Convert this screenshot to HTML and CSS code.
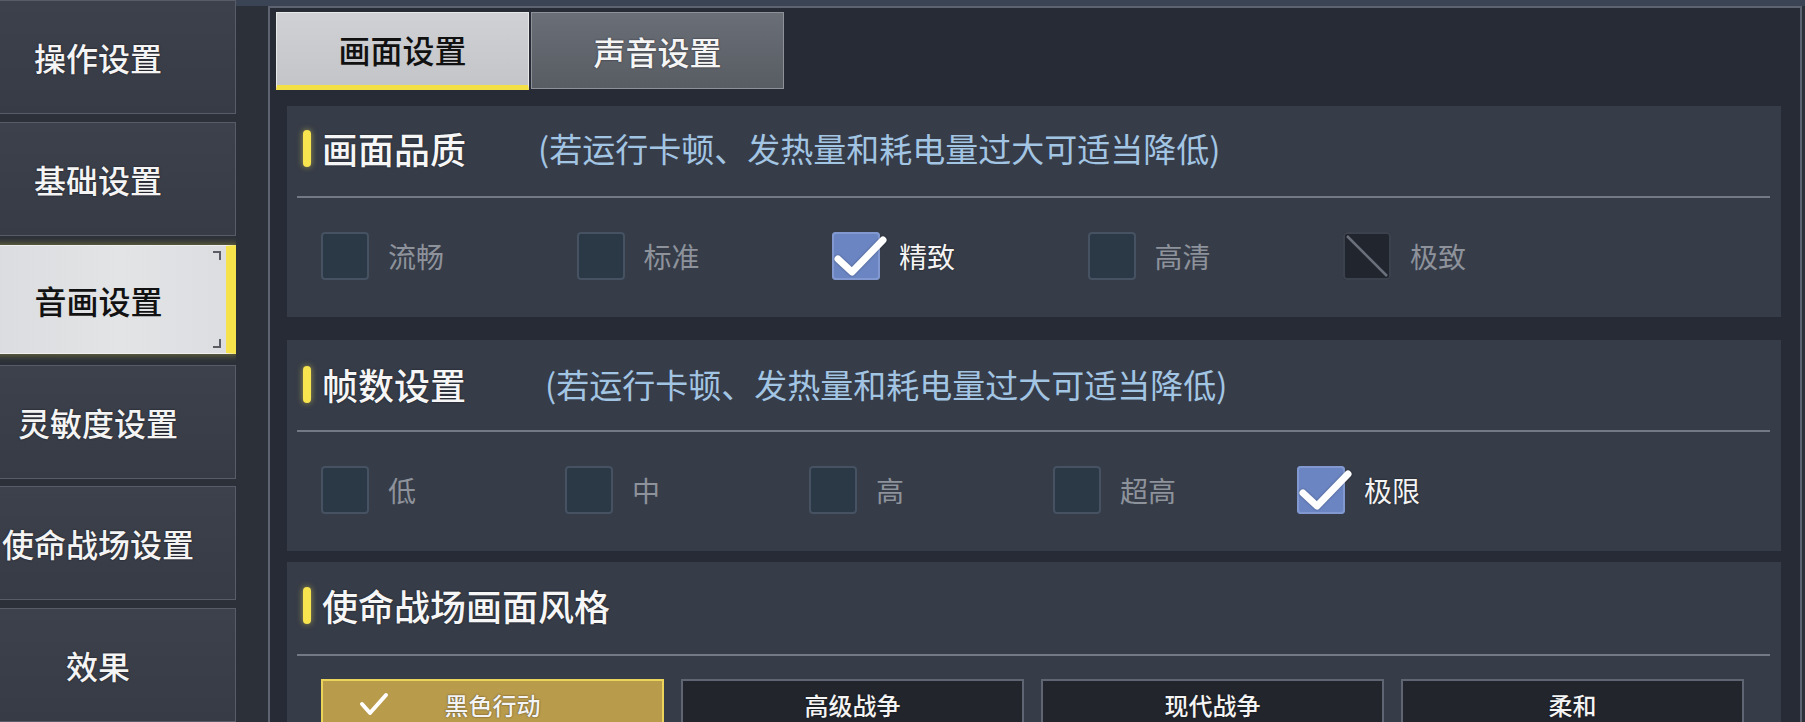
FILE: index.html
```html
<!DOCTYPE html>
<html lang="zh-CN">
<head>
<meta charset="utf-8">
<title>音画设置</title>
<link rel="stylesheet" href="styles.css">
</head>
<body>
<div class="screen">
  <nav class="sidebar">
    <div class="side-tab">操作设置</div>
    <div class="side-tab">基础设置</div>
    <div class="side-tab active">音画设置</div>
    <div class="side-tab">灵敏度设置</div>
    <div class="side-tab">使命战场设置</div>
    <div class="side-tab">效果</div>
  </nav>

  <main class="frame">
    <div class="top-tabs">
      <div class="top-tab active">画面设置</div>
      <div class="top-tab">声音设置</div>
    </div>

    <section class="card card-1">
      <div class="card-head">
        <span class="pill"></span>
        <span class="card-title">画面品质</span>
        <span class="card-hint">(若运行卡顿、发热量和耗电量过大可适当降低)</span>
      </div>
      <div class="divider"></div>
      <div class="opts opts-quality">
        <label class="opt"><span class="box"></span><span>流畅</span></label>
        <label class="opt"><span class="box"></span><span>标准</span></label>
        <label class="opt on"><span class="box checked"><svg viewBox="0 0 48 48" width="48" height="48"><polyline points="6,27 20,40 51,8" fill="none" stroke="#fff" stroke-width="7" stroke-linecap="round" stroke-linejoin="round"/></svg></span><span>精致</span></label>
        <label class="opt"><span class="box"></span><span>高清</span></label>
        <label class="opt"><span class="box disabled"><svg viewBox="0 0 48 48" width="48" height="48"><line x1="4" y1="4" x2="44" y2="44" stroke="#6b717c" stroke-width="2.5"/></svg></span><span>极致</span></label>
      </div>
    </section>

    <section class="card card-2">
      <div class="card-head">
        <span class="pill"></span>
        <span class="card-title">帧数设置</span>
        <span class="card-hint">(若运行卡顿、发热量和耗电量过大可适当降低)</span>
      </div>
      <div class="divider"></div>
      <div class="opts opts-fps">
        <label class="opt"><span class="box"></span><span>低</span></label>
        <label class="opt"><span class="box"></span><span>中</span></label>
        <label class="opt"><span class="box"></span><span>高</span></label>
        <label class="opt"><span class="box"></span><span>超高</span></label>
        <label class="opt on"><span class="box checked"><svg viewBox="0 0 48 48" width="48" height="48"><polyline points="6,27 20,40 51,8" fill="none" stroke="#fff" stroke-width="7" stroke-linecap="round" stroke-linejoin="round"/></svg></span><span>极限</span></label>
      </div>
    </section>

    <section class="card card-3">
      <div class="card-head">
        <span class="pill"></span>
        <span class="card-title">使命战场画面风格</span>
      </div>
      <div class="divider"></div>
      <div class="styles">
        <div class="style-btn selected">
          <svg class="style-check" viewBox="0 0 30 24" width="30" height="24"><polyline points="3,12 11,21 27,3" fill="none" stroke="#fff" stroke-width="4" stroke-linecap="round" stroke-linejoin="round"/></svg>
          <span>黑色行动</span>
          <span></span>
        </div>
        <div class="style-btn"><span></span><span>高级战争</span><span></span></div>
        <div class="style-btn"><span></span><span>现代战争</span><span></span></div>
        <div class="style-btn"><span></span><span>柔和</span><span></span></div>
      </div>
    </section>
  </main>
</div>
</body>
</html>
```

FILE: styles.css
```css
html, body {
  margin: 0;
  padding: 0;
}

body {
  width: 1805px;
  height: 722px;
  overflow: hidden;
  background: #2b3039;
  font-family: "Noto Sans CJK SC", "Noto Sans", sans-serif;
  color: #f3f3f3;
}

.screen {
  display: flex;
  align-items: flex-start;
  height: 722px;
  overflow: hidden;
  background:
    linear-gradient(#3b4455 0, #3b4455 6px, transparent 6px),
    #2b3039;
}

/* ---------- sidebar ---------- */
.sidebar {
  width: 276px;
  height: 722px;
  overflow: hidden;
  margin-left: -40px;
  flex-shrink: 0;
  display: flex;
  flex-direction: column;
  gap: 7.5px;
}

.side-tab {
  height: 114px;
  flex-shrink: 0;
  box-sizing: border-box;
  border: 1px solid #575c68;
  background: linear-gradient(#3d414c, #373b46);
  color: #f4f4f4;
  font-size: 32px;
  font-weight: 500;
  display: flex;
  align-items: center;
  justify-content: center;
  text-shadow: 0 0 2px rgba(0, 0, 0, 0.7);
  position: relative;
}

.side-tab.active {
  height: 109px;
  margin: 2px 0 3px;
  padding-left: 10px;
  background: linear-gradient(90deg, #d9dadd, #e3e4e6 60%, #dcdde0);
  border: 1px solid #f0f0f0;
  border-right: 10px solid #f6e34c;
  box-shadow: 4px 0 8px rgba(246, 227, 76, 0.45);
  color: #121212;
  text-shadow: none;
}

.side-tab.active::before,
.side-tab.active::after {
  content: "";
  position: absolute;
  right: 5px;
  width: 6px;
  height: 7px;
  border-right: 2px solid #5a5d63;
}

.side-tab.active::before {
  top: 5px;
  border-top: 2px solid #5a5d63;
}

.side-tab.active::after {
  bottom: 5px;
  border-bottom: 2px solid #5a5d63;
}

/* ---------- frame ---------- */
.frame {
  width: 1534px;
  height: 716px;
  overflow: hidden;
  box-sizing: border-box;
  margin: 6px 0 0 32px;
  border: 2px solid #5d6370;
  border-bottom: 0;
  background: #262b35;
  padding: 4px 19px 0 17px;
  display: flex;
  flex-direction: column;
  flex-shrink: 0;
}

.top-tabs {
  display: flex;
  gap: 2px;
  margin-left: -11px;
  height: 78px;
  flex-shrink: 0;
}

.top-tab {
  width: 253px;
  box-sizing: border-box;
  font-size: 32px;
  font-weight: 500;
  display: flex;
  align-items: center;
  justify-content: center;
  background: linear-gradient(#6a6e76, #585c63);
  border: 1px solid #8e9197;
  color: #f5f5f5;
  text-shadow: 0 0 2px rgba(0, 0, 0, 0.6);
  height: 77px;
}

.top-tab.active {
  height: 78px;
  background: linear-gradient(#d0d1d4, #c4c5c9);
  border: 1px solid #e8e8e8;
  border-bottom: 5px solid #f3df46;
  color: #111;
  text-shadow: none;
}

/* ---------- cards ---------- */
.card {
  background: #363c48;
  padding: 24px 11px 37px 10px;
  flex-shrink: 0;
}

.card-1 {
  margin-top: 16px;
}

.card-2 {
  margin-top: 23px;
  padding-top: 26px;
  padding-bottom: 37px;
}

.card-2 .divider {
  margin-top: 28px;
}

.card-3 {
  margin-top: 11px;
  padding-top: 25px;
}

.card-head {
  display: flex;
  align-items: center;
  height: 36px;
  margin-left: 6px;
}

.pill {
  width: 8px;
  height: 37px;
  border-radius: 4px;
  background: #f7e44f;
  box-shadow: 0 0 6px rgba(247, 228, 79, 0.55);
  flex-shrink: 0;
}

.card-title {
  margin-left: 11px;
  font-size: 36px;
  line-height: 36px;
  font-weight: 500;
  color: #f6f6f6;
  text-shadow: 0 0 2px rgba(0, 0, 0, 0.6);
  white-space: nowrap;
}

.card-hint {
  margin-left: 72px;
  font-size: 33px;
  line-height: 36px;
  color: #a3c5e4;
  white-space: nowrap;
}

.card-2 .card-hint {
  margin-left: 79px;
}

.divider {
  height: 2px;
  margin-top: 30px;
  background: #737985;
}

.card-3 .divider {
  margin-top: 31px;
}

/* ---------- checkbox rows ---------- */
.opts {
  display: grid;
  margin-top: 34px;
  margin-left: 24px;
  height: 48px;
}

.opts-quality {
  grid-template-columns: repeat(5, 255.5px);
}

.opts-fps {
  grid-template-columns: repeat(5, 244px);
}

.opt {
  display: flex;
  align-items: center;
  gap: 19px;
  font-size: 28px;
  color: #8d929b;
}

.opt.on {
  color: #f3f3f3;
  text-shadow: 0 0 2px rgba(0, 0, 0, 0.6);
}

.box {
  width: 48px;
  height: 48px;
  box-sizing: border-box;
  border-radius: 4px;
  background: #2b3846;
  box-shadow: inset 0 0 0 2px #465262;
  flex-shrink: 0;
  display: block;
}

.box svg {
  display: block;
  overflow: visible;
}

.box.checked {
  background: #6b85c3;
  box-shadow: inset 0 0 0 2px #8199d0;
}

.box.checked svg {
  filter: drop-shadow(0 0 1px rgba(0, 0, 0, 0.35));
}

.box.disabled {
  background: #21252d;
  box-shadow: inset 0 0 0 2px #3c424d;
}

/* ---------- style buttons ---------- */
.styles {
  display: grid;
  grid-template-columns: repeat(4, 1fr);
  gap: 17px;
  margin: 23px 26px 0 24px;
}

.style-btn {
  height: 50px;
  box-sizing: border-box;
  background: #22252c;
  border: 2px solid #5f6572;
  display: grid;
  grid-template-columns: 1fr auto 1fr;
  align-items: center;
  font-size: 24px;
  font-weight: 500;
  color: #f4f4f4;
  text-shadow: 0 0 2px rgba(0, 0, 0, 0.6);
}

.style-btn.selected {
  background: #b99b4c;
  border-color: #ecd45a;
}

.style-check {
  justify-self: start;
  margin-left: 36px;
  display: block;
}
```
